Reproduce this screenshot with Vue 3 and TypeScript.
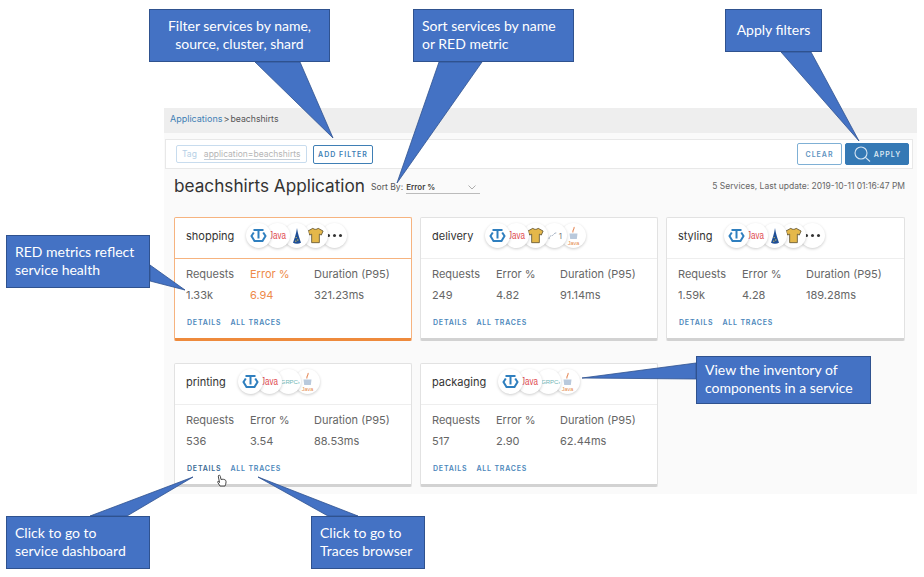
<script setup lang="ts">
type Icon = 't' | 'java' | 'cone' | 'shirt' | 'more' | 'link' | 'duke' | 'grpc'
interface Service {
  name: string
  icons: Icon[]
  requests: string
  error: string
  duration: string
  hot?: boolean
  hover?: boolean
}
const services: Service[] = [
  { name: 'shopping', icons: ['t', 'java', 'cone', 'shirt', 'more'], requests: '1.33k', error: '6.94', duration: '321.23ms', hot: true },
  { name: 'delivery', icons: ['t', 'java', 'shirt', 'link', 'duke'], requests: '249', error: '4.82', duration: '91.14ms' },
  { name: 'styling', icons: ['t', 'java', 'cone', 'shirt', 'more'], requests: '1.59k', error: '4.28', duration: '189.28ms' },
  { name: 'printing', icons: ['t', 'java', 'grpc', 'duke'], requests: '536', error: '3.54', duration: '88.53ms', hover: true },
  { name: 'packaging', icons: ['t', 'java', 'grpc', 'duke'], requests: '517', error: '2.90', duration: '62.44ms' },
]
interface Note { text: string[]; cls: string }
const notes: Note[] = [
  { text: ['Filter services by name,', 'source, cluster, shard'], cls: 'n-filter' },
  { text: ['Sort services by name', 'or RED metric'], cls: 'n-sort' },
  { text: ['Apply filters'], cls: 'n-apply' },
  { text: ['RED metrics reflect', 'service health'], cls: 'n-red' },
  { text: ['View the inventory of', 'components in a service'], cls: 'n-view' },
  { text: ['Click to go to', 'service dashboard'], cls: 'n-dash' },
  { text: ['Click to go to', 'Traces browser'], cls: 'n-traces' },
]
const tails: string[] = [
  '255,62 333,138 300,62',
  '439,62 397,183 482,62',
  '781,52 859,141 811,52',
  '150,265 185,290 150,281',
  '696,363 582,378 696,379',
  '90,516 193,477 127,516',
  '328,516 258,477 358,516',
]
</script>

<template>
  <div class="page">
    <main class="app">
      <nav class="crumbs"><a>Applications</a><span class="sep">&gt;</span><span>beachshirts</span></nav>
      <section class="filters">
        <div class="tag"><span class="tag-key">Tag</span><span class="tag-val">application=beachshirts</span></div>
        <button class="btn add">ADD FILTER</button>
        <div class="spacer"></div>
        <button class="btn clear">CLEAR</button>
        <button class="btn apply">
          <svg width="18" height="18" viewBox="0 0 18 18" fill="none" stroke="#d5e4f2" stroke-width="1.1"><circle cx="8" cy="8" r="6"/><path d="M12.400 12.400 17 16.500"/></svg>
          APPLY
        </button>
      </section>
      <header class="heading">
        <h1>beachshirts Application</h1>
        <span class="sort-label">Sort By:</span>
        <div class="sort-select">
          <span>Error %</span>
          <svg width="8" height="5" viewBox="0 0 8 5" fill="none" stroke="#999" stroke-width="0.8"><path d="M.5.5 4 4 7.500.5"/></svg>
        </div>
        <div class="spacer"></div>
        <span class="updated">5 Services, Last update: 2019-10-11 01:16:47 PM</span>
      </header>
      <section class="grid">
        <article v-for="s in services" :key="s.name" class="card" :class="{ hot: s.hot }">
          <div class="card-head">
            <span class="name">{{ s.name }}</span>
            <div class="badges">
              <span v-for="(ic, i) in s.icons" :key="i" class="badge" :style="{ zIndex: 10 - i }">
                <svg v-if="ic === 't'" width="17" height="17" viewBox="0 0 17 17" fill="none" stroke="#2f7fbf" stroke-width="2">
                  <path d="M3.800 5.500 1.500 9l3 5h8l3-5-2.300-3.500"/>
                  <path d="M3.500 3h10M8.500 3v8.500"/>
                </svg>
                <span v-else-if="ic === 'java'" class="java">Java</span>
                <svg v-else-if="ic === 'cone'" width="10" height="16" viewBox="0 0 12 20">
                  <path d="M6 0C5 7 2.500 14 1 18.500 4 20 8 20 11 18.500 9.500 14 7 7 6 0Z" fill="#1f4f96"/>
                  <circle cx="5" cy="12" r=".8" fill="#e5c94a"/><circle cx="7" cy="15" r=".8" fill="#e5c94a"/><circle cx="4.500" cy="16.500" r=".8" fill="#e5c94a"/>
                </svg>
                <svg v-else-if="ic === 'shirt'" width="17" height="17" viewBox="0 0 19 19">
                  <path d="M6.500 1.500C8 3 11 3 12.500 1.500L18 4.500 16 9l-2.200-1V17.500H5.200V8L3 9 1 4.500Z" fill="#e5b84a" stroke="#5c5030" stroke-width=".9"/>
                </svg>
                <span v-else-if="ic === 'more'" class="more"><i></i><i></i><i></i></span>
                <span v-else-if="ic === 'link'" class="link">
                  <svg width="10" height="8" viewBox="0 0 11 9" fill="none" stroke="#8a9bb0" stroke-width="1" stroke-dasharray="2 1"><path d="M1 8C1 3 5 5 6 3s3-2 4-2"/></svg>1
                </span>
                <span v-else-if="ic === 'grpc'" class="grpc">GRPC›</span>
                <svg v-else width="13" height="20" viewBox="0 0 13 20" fill="none">
                  <path d="M7 1C8 3 5 4 6 6.500" stroke="#e58a5a" stroke-width="1.100"/>
                  <path d="M2.500 7.500h8l-.7 5.500H3.200Z" fill="#b9c9dc"/>
                  <text x="6.500" y="18.500" text-anchor="middle" class="duke-text">Java</text>
                </svg>
              </span>
            </div>
          </div>
          <div class="metrics">
            <div class="metric"><span class="label">Requests</span><span class="value">{{ s.requests }}</span></div>
            <div class="metric err"><span class="label">Error %</span><span class="value">{{ s.error }}</span></div>
            <div class="metric"><span class="label">Duration (P95)</span><span class="value">{{ s.duration }}</span></div>
          </div>
          <div class="links"><a :class="{ hover: s.hover }">DETAILS</a><a>ALL TRACES</a></div>
          <svg v-if="s.name === 'printing'" class="cursor" width="11" height="14" viewBox="0 0 11 14">
            <path d="M2.500 1.500c1-.7 1.700 0 1.900 1L5 5.500c1-.5 4-.3 4.800 1 .6 1.500 0 3.500-.8 5.500H4L1.800 8.500c-.6-1 .3-1.500 1.300-.8L3.500 8.500 2.400 3c-.1-.7-.1-1.200.1-1.500Z" fill="#fff" stroke="#333" stroke-width=".9"/>
          </svg>
        </article>
      </section>
    </main>

    <svg class="tails" width="924" height="577" viewBox="0 0 924 577">
      <polygon v-for="(p, i) in tails" :key="i" :points="p" fill="#4472c4" stroke="#2f528f" stroke-width=".8"/>
    </svg>
    <div v-for="n in notes" :key="n.cls" class="note" :class="n.cls">
      <span v-for="(line, i) in n.text" :key="i">{{ line }}</span>
    </div>
  </div>
</template>

<style>
html, body { background: #fff; }
</style>

<style scoped>
.page {
  position: relative;
  width: 924px;
  height: 577px;
  overflow: hidden;
  padding: 108px 7px 0 164px;
  box-sizing: border-box;
  font-family: Inter, "Noto Sans", sans-serif;
  color: #565656;
}
.app { height: 386px; background: #fafafa; }
.crumbs {
  height: 25px;
  background: #eee;
  display: flex;
  align-items: center;
  padding: 0 0 4px 6px;
  box-sizing: border-box;
  font-size: 9px;
  color: #555;
  gap: 1px;
}
.crumbs span:last-child { font-size: 8.700px; }
.crumbs a { color: #3f7fb5; }
.filters {
  height: 30px;
  margin: 6px 4px 0 1px;
  background: #fff;
  border: 1px solid #e8e8e8;
  box-sizing: border-box;
  display: flex;
  align-items: center;
  padding: 0 3px 0 10px;
}
.spacer { flex: 1; }
.tag {
  width: 131px;
  height: 18px;
  box-sizing: border-box;
  border: 1px solid #c8dcee;
  border-radius: 2px;
  display: flex;
  align-items: center;
  padding: 0 0 0 5px;
  font-size: 8.5px;
  gap: 7px;
  white-space: nowrap;
  overflow: hidden;
}
.tag-key { color: #b6d0e6; }
.tag-val { color: #b5b5b5; border-bottom: 1px solid #c6cfd8; }
.btn {
  font-family: inherit;
  font-weight: 600;
  font-size: 7px;
  letter-spacing: 1px;
  border-radius: 2px;
  height: 19px;
  padding: 0;
  background: #fff;
  color: #3f7fb5;
  border: 1px solid #3f7fb5;
  box-sizing: border-box;
}
.add { width: 60px; margin-left: 6px; }
.clear { width: 45px; height: 22px; border-color: #7fb0d5; color: #5e93bf; }
.apply {
  width: 64px;
  height: 22px;
  margin-left: 3px;
  background: #3579b5;
  color: #dbe8f3;
  border-color: #3579b5;
  display: flex;
  align-items: center;
  justify-content: center;
  gap: 3px;
}
.heading {
  height: 33px;
  display: flex;
  align-items: center;
  padding: 0 12px 0 10px;
}
h1 {
  margin: 0;
  font-size: 17.2px;
  font-weight: 400;
  color: #333;
  white-space: nowrap;
}
.sort-label { font-size: 8.600px; margin: 3px 0 0 6px; white-space: nowrap; }
.sort-select {
  width: 74px;
  height: 13px;
  margin: 4px 0 0 3px;
  box-sizing: border-box;
  border-bottom: 1px solid #bbb;
  display: flex;
  align-items: center;
  justify-content: space-between;
  padding: 0 4px 0 0;
  font-size: 8px;
  font-weight: 600;
  color: #444;
}
.updated { font-size: 8.5px; color: #666; white-space: nowrap; }
.grid {
  display: grid;
  grid-template-columns: 238px 238px 239px;
  grid-auto-rows: 124px;
  column-gap: 8px;
  row-gap: 22px;
  margin: 15px 0 0 10px;
}
.card {
  position: relative;
  background: #fff;
  border: 1px solid #e2e2e2;
  border-bottom: 3px solid #d2d2d2;
  border-radius: 2px;
  box-sizing: border-box;
  display: flex;
  flex-direction: column;
}
.card.hot { border-color: #f6b37f; border-bottom-color: #ee8a3c; }
.card-head {
  height: 41px;
  flex: none;
  box-sizing: border-box;
  border-bottom: 1px solid #eee;
  display: flex;
  align-items: center;
  padding: 0 0 5px 11px;
  gap: 13px;
}
.hot .card-head { border-bottom-color: #f6b37f; }
.name { font-size: 11px; color: #333; }
.badges { display: flex; margin-left: -1px; }
.badge {
  position: relative;
  width: 25px;
  height: 25px;
  flex: none;
  border-radius: 50%;
  background: #fff;
  box-shadow: 0 1px 3px rgba(0, 0, 0, 0.2);
  display: flex;
  align-items: center;
  justify-content: center;
  overflow: hidden;
}
.badge + .badge { margin-left: -6px; }
.java { font-family: "Liberation Sans", sans-serif; font-size: 10px; color: #e0484e; transform: scaleX(0.8); }
.grpc { font-family: "Liberation Sans", sans-serif; font-size: 6px; color: #6fb5b5; letter-spacing: -0.1px; white-space: nowrap; transform: translateX(2px); }
.link { display: flex; align-items: center; font-size: 8px; color: #777; gap: 1px; }
.duke-text { font-family: "Liberation Sans", sans-serif; font-size: 5.500px; fill: #e58a4a; }
.more { display: flex; gap: 3px; }
.more i { width: 3px; height: 3px; border-radius: 50%; background: #333; }
.metrics {
  display: flex;
  padding: 9px 0 0 11px;
}
.metric {
  width: 64px;
  display: flex;
  flex-direction: column;
  gap: 8px;
  font-size: 11px;
  line-height: 13px;
  white-space: nowrap;
  color: #666;
}
.hot .err { color: #ee8a4a; }
.links {
  display: flex;
  gap: 9px;
  padding: 16px 0 0 12px;
  font-size: 7px;
  font-weight: 600;
  letter-spacing: 0.8px;
  color: #4c87bb;
}
.links .hover { color: #3a6a94; }
.cursor { position: absolute; left: 41px; top: 110px; }
.tails { position: absolute; left: 0; top: 0; }
.note {
  position: absolute;
  box-sizing: border-box;
  background: #4472c4;
  border: 1px solid #2f528f;
  color: #fff;
  font-family: Lato, "Open Sans", sans-serif;
  font-size: 14px;
  line-height: 18px;
  display: flex;
  flex-direction: column;
  justify-content: center;
  padding-bottom: 2px;
}
.n-filter { left: 149px; top: 9px; width: 181px; height: 53px; align-items: center; }
.n-sort { left: 413px; top: 9px; width: 161px; height: 53px; padding-left: 8px; }
.n-apply { left: 725px; top: 9px; width: 97px; height: 43px; align-items: center; }
.n-red { left: 6px; top: 235px; width: 144px; height: 53px; padding-left: 8px; }
.n-view { left: 696px; top: 356px; width: 175px; height: 48px; padding-left: 8px; }
.n-dash { left: 6px; top: 516px; width: 144px; height: 53px; padding-left: 8px; }
.n-traces { left: 311px; top: 516px; width: 114px; height: 53px; padding-left: 8px; }
</style>
